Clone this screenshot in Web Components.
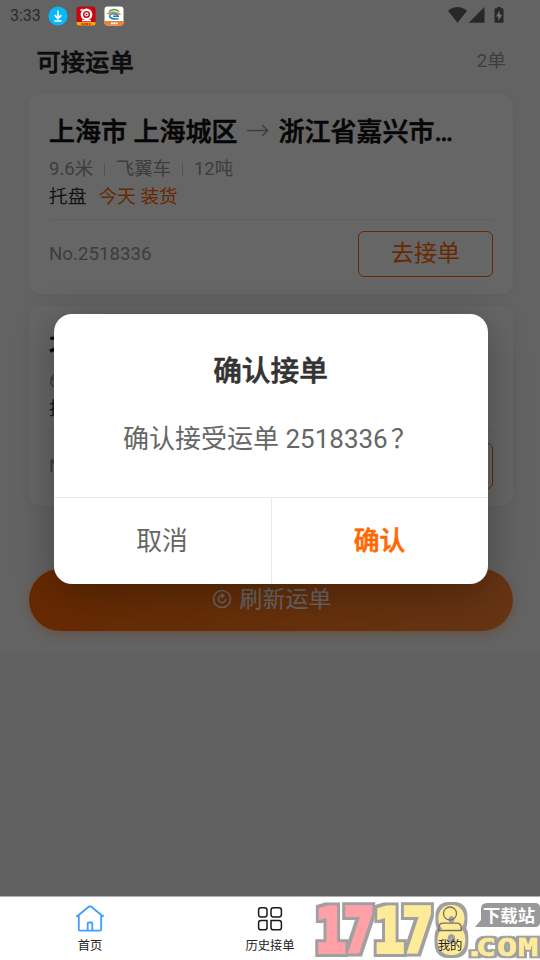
<!DOCTYPE html>
<html lang="zh-CN">
<head>
<meta charset="utf-8">
<title>可接运单</title>
<style>
html,body{margin:0;height:960px;overflow:hidden}
body{font-family:Roboto,"Noto Sans CJK SC",sans-serif;background:#f2f2f2}
</style>
</head>
<body>
<freight-app></freight-app>
<script>
function define(name, html) {
  const t = document.createElement('template');
  t.innerHTML = html;
  customElements.define(name, class extends HTMLElement {
    constructor() {
      super();
      this.attachShadow({ mode: 'open' }).append(t.content.cloneNode(true));
    }
  });
}

define('status-bar', `
<style>
:host{display:flex;align-items:center;height:31px;padding:0 35px 0 10px;box-sizing:border-box;color:#2b2b2b;font-size:16px}
time{width:38px;line-height:33px}
svg{display:block;flex:none}
.a{margin-right:8px}
.sp{flex:1}
</style>
<time>3:33</time>
<svg class="a" width="20" height="20" viewBox="0 0 20 20"><circle cx="10" cy="10" r="9.6" fill="#05b9fb"/><path d="M10 4.5v8M6.7 9.2l3.3 3.5 3.3-3.5M6.3 15h7.4" stroke="#fff" stroke-width="1.7" fill="none"/></svg>
<svg class="a" width="20" height="20" viewBox="0 0 20 20"><rect x=".5" y=".5" width="19" height="19" rx="3" fill="#c9040f"/><path d="M.5 16h19v1a2.5 2.5 0 0 1-2.5 2.500H3A2.500 2.500 0 0 1 .5 17z" fill="#f7a90a"/><circle cx="10.500" cy="8.400" r="4.700" fill="none" stroke="#fff" stroke-width="2.400"/><circle cx="10.500" cy="8.400" r="1.500" fill="none" stroke="#fff" stroke-width="1.200"/><path d="M4.500 4.500l2-1.500M6 14.500h9" stroke="#fff" stroke-width="1.500"/><path d="M5.500 18h9" stroke="#b8420a" stroke-width="1.800" stroke-dasharray="1.700 .7"/></svg>
<svg width="20" height="20" viewBox="0 0 20 20"><rect x=".5" y=".5" width="19" height="19" rx="3" fill="#fff"/><path d="M.5 15h19v2a2.500 2.500 0 0 1-2.500 2.500H3A2.500 2.500 0 0 1 .5 17z" fill="#ee8129"/><path d="M5 5.500q5-4 10 0" stroke="#3ba561" stroke-width="1.500" fill="none"/><path d="M3.500 8q6-4 13 .5" stroke="#f08a24" stroke-width="1.600" fill="none"/><path d="M14 9Q6 6 5.500 10.500q2 3.200 9 2.300M9 10.200h6" stroke="#1687c8" stroke-width="1.500" fill="none"/><path d="M7 17.300h7" stroke="#fff" stroke-width="1.800" stroke-dasharray="1.800 .5"/></svg>
<span class="sp"></span>
<svg width="57" height="20" viewBox="0 0 57 20" fill="#282828"><path d="M0 4.800C6-.2 13 -.2 19 4.800L9.500 16.700z"/><path d="M36.500 1.100v15.600H20.800z"/><path d="M47.500 2.200h1.700V1h3.600v1.200h1.700q1 0 1 1v12.600q0 1-1 1h-7q-1 0-1-1V3.200q0-1 1-1z"/><path d="M51.600 4.500l-3.500 6h2.300v4.300l3.600-6h-2.400z" fill="#757575"/></svg>
`);

define('list-header', `
<style>
:host{display:flex;justify-content:space-between;align-items:center;height:63px;padding:0 34px 0 36.500px;box-sizing:border-box;line-height:36px}
.t{font-size:24.300px;font-weight:500;-webkit-text-stroke:.6px;color:#222}
.n{font-size:18.700px;color:#999;position:relative;top:-2px}
</style>
<span class="t"><slot></slot></span><span class="n"><slot name="count"></slot></span>
`);

define('order-card', `
<style>
:host{display:block;height:200px;margin:0 27px 12px 29px;padding:21px 20px 0;box-sizing:border-box;background:#fff;border-radius:12px;box-shadow:0 2px 12px rgba(0,0,0,.06);white-space:nowrap}
.route{display:flex;align-items:center;height:34px;font-size:26px;font-weight:500;-webkit-text-stroke:.6px;color:#111;line-height:34px}
.route svg{margin:-3px 8px 0 9px;flex:none}
.meta{display:flex;align-items:center;height:28px;margin-top:6px;font-size:18.500px;line-height:28px;color:#999}
.meta i{width:1px;height:13px;background:#ccc;margin:0 10.800px}
.tags{display:flex;gap:12px;height:28px;line-height:28px;font-size:18.700px;color:#333}
.tags b{font-weight:400;color:#ff6700}
.foot{display:flex;align-items:center;justify-content:space-between;margin-top:8px;padding-top:11px;border-top:1px solid #eee;color:#999;font-size:18.700px}
button{all:unset;box-sizing:border-box;width:135px;height:46px;border:1px solid #ff6700;border-radius:6px;color:#ff6700;text-align:center;font-size:23px;line-height:42px}
</style>
<div class="route"><slot name="from"></slot><svg width="24" height="16" viewBox="0 0 24 16"><path d="M1 7.500h20.500M16 2L21.700 7.500 16 13" fill="none" stroke="#999" stroke-width="1.500"/></svg><slot name="to"></slot></div>
<div class="meta"><slot name="length"></slot><i></i><slot name="type"></slot><i></i><slot name="weight"></slot></div>
<div class="tags"><slot name="tag"></slot><b><slot name="when"></slot></b></div>
<div class="foot"><slot name="no"></slot><button>去接单</button></div>
`);

define('refresh-button', `
<style>
:host{display:flex;align-items:center;justify-content:center;height:62px;margin:63px 27px 0 29px;border-radius:31px;background:linear-gradient(135deg,#ff6700,#ff8534);box-shadow:0 4px 12px rgba(255,103,0,.3);color:#fff;font-size:23px;line-height:61px;box-sizing:border-box;padding:1px 0 2px 1px}
svg{margin:-2px 8px 0 0}
</style>
<svg width="20" height="20" viewBox="0 0 20 20" fill="none" stroke="#fff" stroke-width="1.500"><circle cx="10" cy="10" r="8.500"/><path d="M13.600 9.800A3.600 3.600 0 1 1 10.500 6.500M9.300 4.300l2.500 2.400-2.500 2.300"/></svg><slot></slot>
`);

define('confirm-dialog', `
<style>
:host{position:absolute;left:54px;top:314px;width:434px;height:270px;display:flex;flex-direction:column;background:#fff;border-radius:18px;box-shadow:0 8px 40px rgba(0,0,0,.3);text-align:center;overflow:hidden}
.t{padding:37px 1px 0 0;font-size:28.700px;line-height:40px;font-weight:500;-webkit-text-stroke:.6px;color:#333}
.m{padding:28px 0 0 69px;text-align:left;font-size:26px;line-height:40px;color:#666;flex:1}
.b{display:grid;grid-template-columns:1fr 1fr;height:86px;border-top:1px solid #eaeaea;font-size:25.800px;line-height:86px;color:#666}
.b span+span{border-left:1px solid #eaeaea;color:#ff6700;font-weight:500;-webkit-text-stroke:.6px}
.b span{padding-right:1px}
</style>
<div class="t"><slot name="title"></slot></div><div class="m"><slot></slot></div>
<div class="b"><span>取消</span><span>确认</span></div>
`);

define('nav-item', `
<style>
:host{display:flex;flex-direction:column;align-items:center;font-size:12.300px;line-height:18px;color:#222;padding-top:8px}
::slotted(svg){display:block;margin-bottom:4px}
</style>
<slot name="icon"></slot><span><slot></slot></span>
`);

define('tab-bar', `
<style>
:host{position:absolute;left:0;top:896px;width:540px;height:64px;box-sizing:border-box;border-top:1px solid #b0b0b0;background:#fff}
.items{position:relative;display:grid;grid-template-columns:repeat(3,1fr)}
</style>
<slot name="mark"></slot>
<div class="items">
<nav-item><svg slot="icon" width="30" height="28" viewBox="0 0 30 28" fill="none" stroke="#409eff" stroke-width="1.800" stroke-linejoin="round"><path d="M1.200 11.500L4 9.800 14 1.500h2L26 9.800l2.800 1.700M3.800 10v14.500q0 1.200 1.200 1.200h20q1.200 0 1.200-1.200V10M12.700 25.500v-7q0-1 1-1h2.600q1 0 1 1v7"/></svg>首页</nav-item>
<nav-item><svg slot="icon" width="30" height="28" viewBox="0 0 30 28" fill="none" stroke="#1a1a1a" stroke-width="1.500"><path d="M6 2.800h3.600Q12 2.800 12 5.200v4.400Q12 12 9.600 12H6q-2.400 0-2.400-2.400V5.200Q3.600 2.800 6 2.800zM18.400 2.800H24q2.400 0 2.400 2.400v4.400Q26.400 12 24 12h-5.600q-2.400 0-2.400-2.400V5.200q0-2.400 2.400-2.400zM6 15.600h6v6.800q0 2.400-2.400 2.400H6q-2.400 0-2.400-2.400V18q0-2.400 2.400-2.400zM16 15.600h8q2.400 0 2.400 2.400v4.400q0 2.400-2.400 2.400h-5.600q-2.400 0-2.400-2.400z"/></svg>历史接单</nav-item>
<nav-item><svg slot="icon" width="30" height="28" viewBox="0 0 30 28" fill="none" stroke="#77725c" stroke-width="1.300"><circle cx="15" cy="8.500" r="6.500"/><path d="M3.800 25.500v-2.700q0-4.600 4.600-4.600h13.200q4.600 0 4.600 4.600v2.700z"/></svg>我的</nav-item>
</div>
`);

define('site-mark', `
<style>
:host{position:absolute;left:312px;top:-1px;width:228px;height:64px}
svg{display:block}
text{font-family:"DejaVu Sans Mono",monospace;font-weight:700;paint-order:stroke}
.d{font-size:61px;stroke-width:4px}
.r{fill:#ffa0a7;stroke:#ffa0a7}
.y{fill:#feeb99;stroke:#feeb99}
.c{font-size:25px;stroke-width:.5px}
.b{font:700 17px "Noto Sans CJK SC",sans-serif;fill:#fff}
</style>
<svg width="228" height="64" viewBox="0 0 228 64">
<defs><filter id="edge" x="-10%" y="-10%" width="120%" height="130%"><feMorphology in="SourceAlpha" operator="dilate" radius="3" result="o"/><feFlood flood-color="#a0a0a0"/><feComposite in2="o" operator="in"/><feMerge><feMergeNode/><feMergeNode in="SourceGraphic"/></feMerge></filter>
<filter id="thin" x="-10%" y="-10%" width="120%" height="130%"><feMorphology in="SourceAlpha" operator="dilate" radius="2" result="o"/><feFlood flood-color="#a0a0a0"/><feComposite in2="o" operator="in"/><feMerge><feMergeNode/><feMergeNode in="SourceGraphic"/></feMerge></filter></defs>
<g class="d" filter="url(#edge)" transform="scale(.84 1)">
<text class="r" x="4 37.500" y="56.500">17</text>
<text class="y" x="73.500 107.500 147.500" y="56.500">178</text>
</g>
<path d="M163 31l6-7V13q0-6 6-6h48q5 0 5 5v14q0 5-5 5z" fill="#999"/>
<text class="b" x="171" y="25.500" textLength="52" lengthAdjust="spacingAndGlyphs">下载站</text>
<g filter="url(#thin)" transform="translate(158 0) scale(1.350 1)"><text class="c y" x="-4 4.500 20 35.500" y="60">.COM</text></g>
</svg>
`);

define('freight-app', `
<style>
:host{display:block;position:relative;width:540px;height:960px;overflow:hidden;background:#f2f2f2}
main{height:653px;padding-top:31px;box-sizing:border-box;background:#f8f8f8}
.mask{position:absolute;inset:0;background:rgba(0,0,0,.6)}
status-bar{position:absolute;left:0;top:0;width:540px}
.q{padding-left:3px}
</style>
<main>
<list-header>可接运单<span slot="count">2单</span></list-header>
<order-card><span slot="from">上海市 上海城区</span><span slot="to">浙江省嘉兴市…</span><span slot="length">9.6米</span><span slot="type">飞翼车</span><span slot="weight">12吨</span><span slot="tag">托盘</span><span slot="when">今天 装货</span><span slot="no">No.2518336</span></order-card>
<order-card><span slot="from">北</span><span slot="length">6</span><span slot="tag">托</span><span slot="no">N</span></order-card>
<refresh-button>刷新运单</refresh-button>
</main>
<div class="mask"></div>
<status-bar></status-bar>
<confirm-dialog><span slot="title">确认接单</span>确认接受运单 2518336<span class="q">？</span></confirm-dialog>
<tab-bar><site-mark slot="mark"></site-mark></tab-bar>
`);
</script>
</body>
</html>
